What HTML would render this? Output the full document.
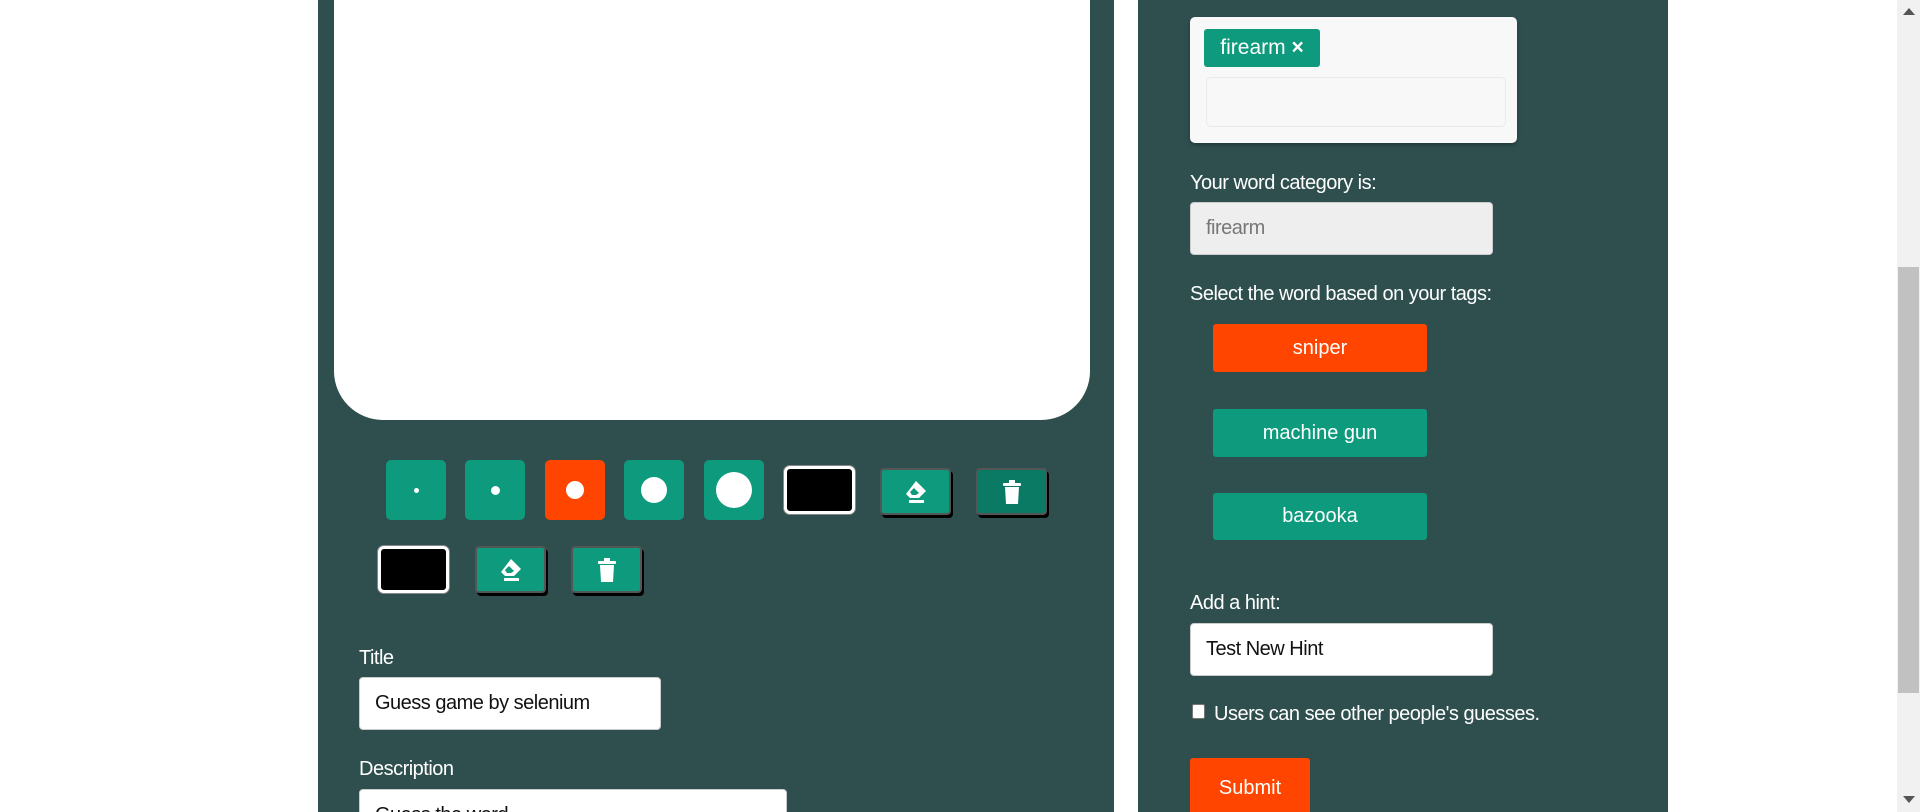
<!DOCTYPE html>
<html style="width:1920px;height:812px;overflow:hidden"><head><style>
*{box-sizing:border-box;margin:0;padding:0}
body{width:1920px;height:812px;overflow:hidden;background:#fff;font-family:"Liberation Sans",sans-serif;position:relative}
.a{position:absolute}
.panel{background:#2f4f4f}
.t{color:#fff;font-size:20px;letter-spacing:-0.5px}
.btn{background:#0e9a7d;border-radius:5px;display:flex;align-items:center;justify-content:center}
.dot{background:#fff;border-radius:50%}
.inp{background:#fff;border-radius:4px;border:1px solid #ccc;font-size:20px;color:#111;padding-left:15px;display:flex;align-items:center;letter-spacing:-0.5px}
.blk{background:#000;border:3px solid #fff;border-radius:6px;box-shadow:0 0 0 1px #888}
.ic{background:#0e9a7d;border:2px solid #555;border-radius:4px;box-shadow:2px 3px 0 #000;display:flex;align-items:center;justify-content:center}
.wb{color:#fff;font-size:20px;display:flex;align-items:center;justify-content:center;border-radius:3px}
</style></head><body>
<div class="a" style="left:0;top:0;width:1920px;height:812px;overflow:hidden">
<div class="a panel" style="left:318px;top:0;width:796px;height:812px"></div>
<div class="a" style="left:334px;top:0;width:756px;height:420px;background:#fff;border-radius:0 0 49px 49px"></div>
<div class="a panel" style="left:1138px;top:0;width:530px;height:812px"></div>
<div class="a" style="left:1897px;top:0;width:23px;height:812px;background:#f1f1f1"></div>
<div class="a" style="left:1898px;top:267px;width:21px;height:426px;background:#c1c1c1"></div>
<div class="a" style="left:1903px;top:8px;width:0;height:0;border-left:6px solid transparent;border-right:6px solid transparent;border-bottom:7px solid #555"></div>
<div class="a" style="left:1903px;top:796px;width:0;height:0;border-left:6px solid transparent;border-right:6px solid transparent;border-top:7px solid #555"></div>

<div class="a btn" style="left:386px;top:460px;width:60px;height:60px"><div class="dot" style="width:5px;height:5px"></div></div>
<div class="a btn" style="left:465px;top:460px;width:60px;height:60px"><div class="dot" style="width:9px;height:9px"></div></div>
<div class="a btn" style="left:545px;top:460px;width:60px;height:60px;background:#ff4500"><div class="dot" style="width:18px;height:18px"></div></div>
<div class="a btn" style="left:624px;top:460px;width:60px;height:60px"><div class="dot" style="width:26px;height:26px"></div></div>
<div class="a btn" style="left:704px;top:460px;width:60px;height:60px"><div class="dot" style="width:36px;height:36px"></div></div>
<div class="a blk" style="left:784px;top:466px;width:71px;height:48px"></div>
<svg width="0" height="0" style="position:absolute"><defs>
<g id="er"><path d="M11 0 L21 10 L14 17 L5 17 L1 13 Z" fill="#fff"/><path d="M5 11 L9 7 L14 12 L11 14 L7 14 Z" fill="#0e9a7d"/><rect x="4" y="19" width="15" height="3" fill="#fff"/></g>
<g id="tr"><rect x="0" y="3" width="18" height="3" rx="1" fill="#fff"/><rect x="6" y="0" width="6" height="4" fill="#fff"/><path d="M2 7 H16 L15 24 H3 Z" fill="#fff"/></g>
</defs></svg>
<div class="a ic" style="left:880px;top:468px;width:71px;height:47px"><svg width="22" height="22"><use href="#er"/></svg></div>
<div class="a ic" style="left:976px;top:468px;width:71px;height:47px;background:#0b7a64"><svg width="18" height="24"><use href="#tr"/></svg></div>
<div class="a blk" style="left:378px;top:546px;width:71px;height:47px"></div>
<div class="a ic" style="left:475px;top:546px;width:71px;height:47px"><svg width="22" height="22"><use href="#er"/></svg></div>
<div class="a ic" style="left:571px;top:546px;width:71px;height:47px"><svg width="18" height="24"><use href="#tr"/></svg></div>

<div class="a t" style="left:359px;top:647px">Title</div>
<div class="a inp" style="left:359px;top:677px;width:302px;height:53px">Guess game by selenium</div>
<div class="a t" style="left:359px;top:758px">Description</div>
<div class="a inp" style="left:359px;top:789px;width:428px;height:53px;align-items:flex-start;padding-top:14px">Guess the word</div>

<div class="a" style="left:1190px;top:17px;width:327px;height:126px;background:#f8f8f8;border-radius:5px;box-shadow:0 2px 4px rgba(0,0,0,.3)"></div>
<div class="a wb" style="left:1204px;top:29px;width:116px;height:38px;background:#0e9a7d;font-size:21px">firearm&nbsp;<b>×</b></div>
<div class="a" style="left:1206px;top:77px;width:300px;height:50px;border:1px solid #eaeaea;border-radius:5px;background:#f8f8f8"></div>
<div class="a t" style="left:1190px;top:172px">Your word category is:</div>
<div class="a inp" style="left:1190px;top:202px;width:303px;height:53px;background:#eee;color:#777">firearm</div>
<div class="a t" style="left:1190px;top:283px">Select the word based on your tags:</div>
<div class="a wb" style="left:1213px;top:324px;width:214px;height:48px;background:#ff4500">sniper</div>
<div class="a wb" style="left:1213px;top:409px;width:214px;height:48px;background:#0e9a7d">machine gun</div>
<div class="a wb" style="left:1213px;top:493px;width:214px;height:47px;background:#0e9a7d">bazooka</div>
<div class="a t" style="left:1190px;top:592px">Add a hint:</div>
<div class="a inp" style="left:1190px;top:623px;width:303px;height:53px">Test New Hint</div>
<div class="a" style="left:1192px;top:704px;width:13px;height:15px;background:#fff;border:1px solid #777;border-radius:2px"></div>
<div class="a t" style="left:1214px;top:703px">Users can see other people's guesses.</div>
<div class="a wb" style="left:1190px;top:758px;width:120px;height:60px;background:#ff4500">Submit</div>
</div>
</body></html>
